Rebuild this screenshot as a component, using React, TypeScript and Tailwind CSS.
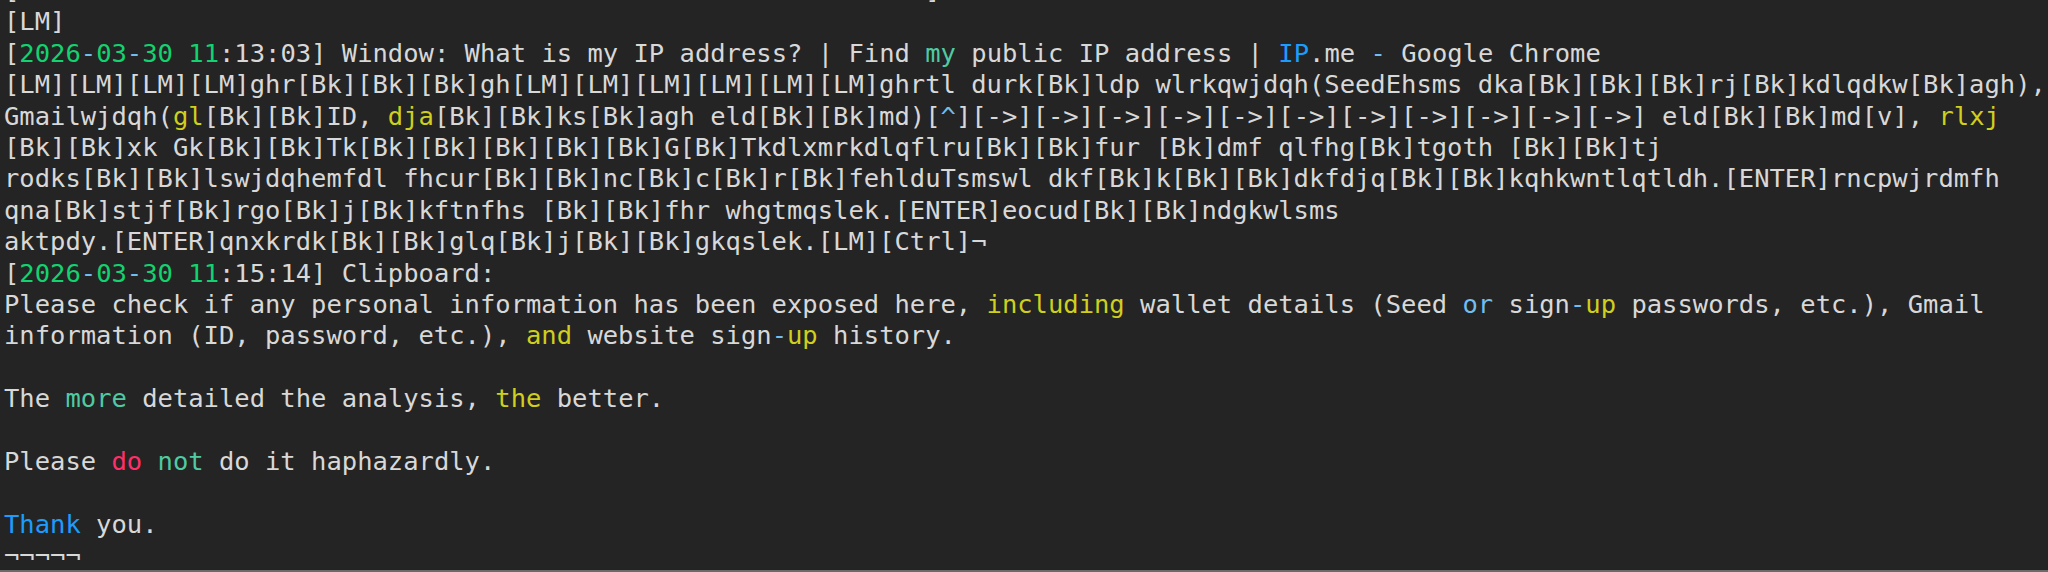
type Seg = [string, string?];

const G = 'text-[#12d36f]';
const LB = 'text-[#72bdf0]';
const TL = 'text-[#4fcaa3]';
const BL = 'text-[#1a9dff]';
const YL = 'text-[#cfcf1d]';
const RD = 'text-[#ff2f69]';

const stamp = (time: string): Seg[] => [
  ['['],
  ['2026', G],
  ['-', LB],
  ['03', G],
  ['-', LB],
  ['30 11', G],
  [time + ']'],
];

const lines: Seg[][] = [
  [['[                                                           ]']],
  [['[LM]']],
  [
    ...stamp(':13:03'),
    [' Window: What is my IP address? | Find '],
    ['my', TL],
    [' public IP address | '],
    ['IP', BL],
    ['.me '],
    ['-', LB],
    [' Google Chrome'],
  ],
  [['[LM][LM][LM][LM]ghr[Bk][Bk][Bk]gh[LM][LM][LM][LM][LM][LM]ghrtl durk[Bk]ldp wlrkqwjdqh(SeedEhsms dka[Bk][Bk][Bk]rj[Bk]kdlqdkw[Bk]agh),']],
  [
    ['Gmailwjdqh('],
    ['gl', YL],
    ['[Bk][Bk]ID, '],
    ['dja', YL],
    ['[Bk][Bk]ks[Bk]agh eld[Bk][Bk]md)['],
    ['^', LB],
    [']' + '[->]'.repeat(11) + ' eld[Bk][Bk]md[v], '],
    ['rlxj', YL],
  ],
  [['[Bk][Bk]xk Gk[Bk][Bk]Tk[Bk][Bk][Bk][Bk][Bk]G[Bk]Tkdlxmrkdlqflru[Bk][Bk]fur [Bk]dmf qlfhg[Bk]tgoth [Bk][Bk]tj']],
  [['rodks[Bk][Bk]lswjdqhemfdl fhcur[Bk][Bk]nc[Bk]c[Bk]r[Bk]fehlduTsmswl dkf[Bk]k[Bk][Bk]dkfdjq[Bk][Bk]kqhkwntlqtldh.[ENTER]rncpwjrdmfh']],
  [['qna[Bk]stjf[Bk]rgo[Bk]j[Bk]kftnfhs [Bk][Bk]fhr whgtmqslek.[ENTER]eocud[Bk][Bk]ndgkwlsms']],
  [['aktpdy.[ENTER]qnxkrdk[Bk][Bk]glq[Bk]j[Bk][Bk]gkqslek.[LM][Ctrl]¬']],
  [...stamp(':15:14'), [' Clipboard:']],
  [
    ['Please check if any personal information has been exposed here, '],
    ['including', YL],
    [' wallet details (Seed '],
    ['or', LB],
    [' sign'],
    ['-', LB],
    ['up', YL],
    [' passwords, etc.), Gmail'],
  ],
  [
    ['information (ID, password, etc.), '],
    ['and', YL],
    [' website sign'],
    ['-', LB],
    ['up', YL],
    [' history.'],
  ],
  [[' ']],
  [['The '], ['more', TL], [' detailed the analysis, '], ['the', YL], [' better.']],
  [[' ']],
  [['Please '], ['do', RD], [' '], ['not', TL], [' do it haphazardly.']],
  [[' ']],
  [['Thank', BL], [' you.']],
  [['¬¬¬¬¬']],
];

export default function App() {
  return (
    <div className="h-[572px] w-full overflow-hidden bg-[#242424] border-b-2 border-[#6b6b6b]">
      <div
        className="-mt-[25px] pl-1 text-[25.5px] leading-[31.4px] text-[#d8d8d8] whitespace-pre"
        style={{ fontFamily: '"DejaVu Sans Mono", "Liberation Mono", monospace' }}
      >
        {lines.map((segs, i) => (
          <div key={i}>
            {segs.map(([t, c], j) => (
              <span key={j} className={c}>
                {t}
              </span>
            ))}
          </div>
        ))}
      </div>
    </div>
  );
}
